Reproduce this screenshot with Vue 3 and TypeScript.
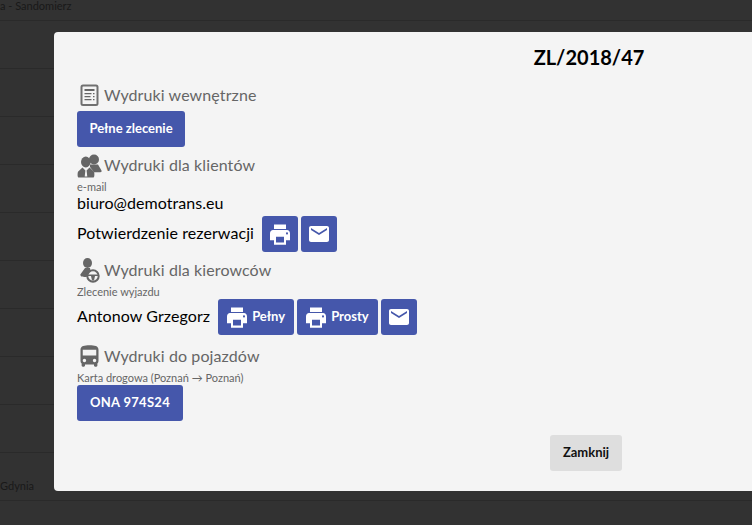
<script setup lang="ts">
const rows: string[] = Array.from({ length: 11 }, (_, i) =>
  i === 0 ? 'a - Sandomierz' : i === 10 ? 'Gdynia' : ''
)
const printPath =
  'M19 8H5c-1.66 0-3 1.34-3 3v6h4v4h12v-4h4v-6c0-1.66-1.34-3-3-3zm-3 11H8v-5h8v5zm3-7c-.55 0-1-.45-1-1s.45-1 1-1 1 .45 1 1-.45 1-1 1zm-1-9H6v4h12V3z'
const mailPath =
  'M20 4H4c-1.1 0-1.99.9-1.99 2L2 18c0 1.1.9 2 2 2h16c1.1 0 2-.9 2-2V6c0-1.1-.9-2-2-2zm0 4l-8 5-8-5V6l8 5 8-5v2z'
const busPath =
  'M4 16c0 .88.39 1.67 1 2.22V20c0 .55.45 1 1 1h1c.55 0 1-.45 1-1v-1h8v1c0 .55.45 1 1 1h1c.55 0 1-.45 1-1v-1.78c.61-.55 1-1.34 1-2.22V6c0-3.5-3.58-4-8-4s-8 .5-8 4v10zm3.5 1c-.83 0-1.5-.67-1.5-1.5S6.67 14 7.5 14s1.5.67 1.5 1.5S8.33 17 7.5 17zm9 0c-.83 0-1.5-.67-1.5-1.5s.67-1.5 1.5-1.5 1.5.67 1.5 1.5-.67 1.5-1.5 1.5zm1.500-6H6V6h12v5z'
</script>

<template>
  <div class="page">
    <div class="table">
      <div v-for="(r, i) in rows" :key="i" class="row">{{ r }}</div>
    </div>

    <div class="modal">
      <h1 class="title">ZL/2018/47</h1>

      <div class="heading">
        <svg class="icon" width="25" height="22" viewBox="0 0 20 22">
          <rect x="2" y="1.500" width="16" height="19.500" rx="1.500" fill="none" stroke="#707070" stroke-width="2" />
          <path d="M5 5h10v2H5zM5 9h7v1.300H5zM13.500 9H15v1.300h-1.500zM5 12h6v1.300H5zM13.500 12H15v1.300h-1.500zM5 15h7v1.300H5zM13.500 15H15v1.300h-1.500z" fill="#666" />
        </svg>
        <span>Wydruki wewnętrzne</span>
      </div>
      <button class="btn wide1"><span>Pełne zlecenie</span></button>

      <div class="heading h2">
        <svg class="icon" width="25" height="25" viewBox="0 0 25 25">
          <circle cx="17" cy="6.500" r="5" fill="#666" />
          <path d="M13 11.500h8l3.500 6c.4 1-.2 1.700-1.200 1.700H17L13 14z" fill="#666" />
          <ellipse cx="8.800" cy="9" rx="4.800" ry="5.400" fill="#666" />
          <path d="M5.500 14.500 1.200 18.500C.3 19.600.4 24.500 1.500 24.500H16.500c1.100 0 1.200-4.900.3-6l-4.300-4L9.600 17.500l.7 6H7.700l.7-6z" fill="#666" />
        </svg>
        <span>Wydruki dla klientów</span>
      </div>
      <div class="small s2">e-mail</div>
      <div class="email">biuro@demotrans.eu</div>
      <div class="line l1">
        <span class="name">Potwierdzenie rezerwacji</span>
        <div class="btns">
          <button class="btn square"><svg class="print" viewBox="0 0 24 24" preserveAspectRatio="none"><path :d="printPath" fill="#fff" /></svg></button>
          <button class="btn square"><svg width="24" height="24" viewBox="0 0 24 24"><path :d="mailPath" fill="#fff" /></svg></button>
        </div>
      </div>

      <div class="heading h3">
        <svg class="icon" width="25" height="25" viewBox="0 0 22 25">
          <ellipse cx="9" cy="5" rx="4.500" ry="5" fill="#666" />
          <path d="M6.500 10h5l.6 3.200a6.500 6.500 0 0 0-3.800 5.800C5 19 1.800 19 1.800 16.500z" fill="#666" />
          <circle cx="14.500" cy="18" r="5.700" fill="none" stroke="#666" stroke-width="2" />
          <path d="M9.500 16.500h10V18h-3l-1 4.500h-2l-1-4.500h-3z" fill="#666" />
        </svg>
        <span>Wydruki dla kierowców</span>
      </div>
      <div class="small s3">Zlecenie wyjazdu</div>
      <div class="line l2">
        <span class="name">Antonow Grzegorz</span>
        <div class="btns">
          <button class="btn icon-text w-pelny"><svg class="print" viewBox="0 0 24 24" preserveAspectRatio="none"><path :d="printPath" fill="#fff" /></svg><span>Pełny</span></button>
          <button class="btn icon-text w-prosty"><svg class="print" viewBox="0 0 24 24" preserveAspectRatio="none"><path :d="printPath" fill="#fff" /></svg><span>Prosty</span></button>
          <button class="btn square"><svg width="24" height="24" viewBox="0 0 24 24"><path :d="mailPath" fill="#fff" /></svg></button>
        </div>
      </div>

      <div class="heading h4">
        <svg class="icon bus" width="27" height="27" viewBox="0 0 24 24"><path :d="busPath" fill="#666" /></svg>
        <span>Wydruki do pojazdów</span>
      </div>
      <div class="small s4">Karta drogowa (Poznań → Poznań)</div>
      <button class="btn wide2"><span>ONA 974S24</span></button>

      <div class="footer">
        <button class="btn close"><span>Zamknij</span></button>
      </div>
    </div>
  </div>
</template>

<style>
html,
body {
  margin: 0;
  overflow: hidden;
  background: #323232;
}
</style>

<style scoped>
.page {
  position: relative;
  width: 752px;
  height: 525px;
  overflow: hidden;
  background: #323232;
  font-family: Lato, 'Liberation Sans', sans-serif;
}
.table {
  margin-top: -27px;
}
.row {
  box-sizing: border-box;
  height: 48px;
  border-bottom: 1px solid #2a2a2a;
  padding-top: 26px;
  font-size: 11px;
  line-height: 14px;
  color: #191919;
}
.modal {
  position: absolute;
  left: 54px;
  top: 32px;
  box-sizing: border-box;
  width: 1070px;
  height: 459px;
  padding: 0 23px;
  background: #f4f4f4;
  border-radius: 4px;
}
.title {
  margin: 0;
  height: 49px;
  padding-top: 13px;
  box-sizing: border-box;
  font-size: 20px;
  line-height: 24px;
  font-weight: 700;
  text-align: center;
  color: #000;
}
.heading {
  display: flex;
  align-items: center;
  height: 28px;
  font-size: 16px;
  letter-spacing: 0.1px;
  color: #666;
}
.heading .icon {
  flex: none;
}
.heading .bus {
  margin: 0 -1px;
}
.heading span {
  margin-left: 2px;
  padding-bottom: 2px;
}
.h2 {
  margin-top: 4px;
}
.h3 {
  margin-top: 4px;
}
.h4 {
  margin-top: 7px;
}
.btn {
  display: flex;
  align-items: center;
  justify-content: center;
  box-sizing: border-box;
  height: 36px;
  padding: 0;
  border: 0;
  border-radius: 3px;
  background: #4557ab;
  color: #fff;
  font-family: inherit;
  font-size: 13px;
  font-weight: 700;
}
.btn span {
  padding-bottom: 2px;
}
.print {
  width: 24px;
  height: 27px;
}
.wide1 {
  width: 108px;
  margin-top: 2px;
}
.wide2 {
  width: 106px;
  margin-top: 1px;
  letter-spacing: 0.3px;
}
.square {
  width: 36px;
}
.icon-text {
  justify-content: flex-start;
  gap: 3px;
  padding-left: 7px;
}
.w-pelny {
  width: 76px;
}
.w-prosty {
  width: 81px;
}
.small {
  font-size: 11px;
  line-height: 12px;
  color: #666;
}
.s2,
.s3,
.s4 {
  margin-top: 2px;
}
.email {
  margin-top: 1px;
  font-size: 16px;
  line-height: 18px;
  letter-spacing: 0.05px;
  color: #000;
}
.line {
  display: flex;
  align-items: center;
  gap: 8px;
  font-size: 16px;
  letter-spacing: 0.08px;
  color: #000;
}
.name {
  padding-bottom: 3px;
}
.l1 {
  margin-top: 4px;
}
.l2 {
  margin-top: 1px;
}
.btns {
  display: flex;
  gap: 3px;
  letter-spacing: 0;
}
.footer {
  display: flex;
  margin-top: 14px;
  padding-left: 473px;
}
.close {
  width: 72px;
  background: #dedede;
  color: #111;
}
</style>
